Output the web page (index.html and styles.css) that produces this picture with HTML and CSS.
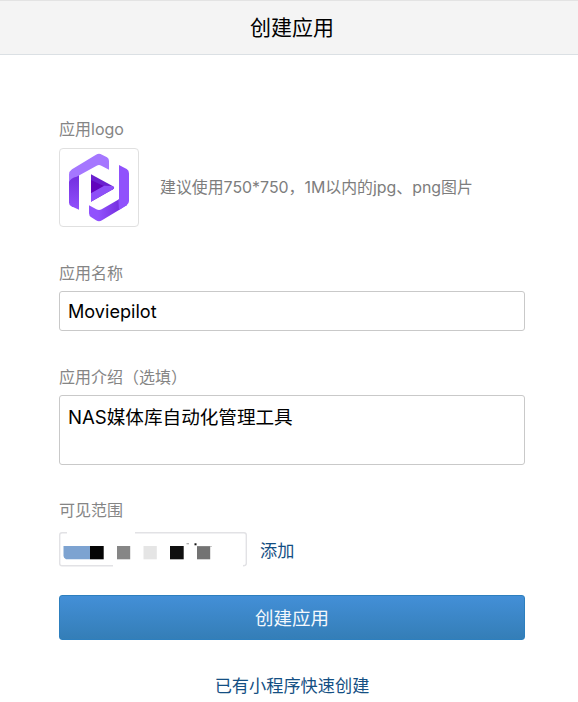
FILE: index.html
```html
<!DOCTYPE html>
<html lang="zh-CN">
<head>
<meta charset="utf-8">
<title>创建应用</title>
<link rel="stylesheet" href="styles.css">
</head>
<body>
<header class="header"><h1 class="title">创建应用</h1></header>
<main class="form">
  <section class="field field-logo">
    <div class="label">应用logo</div>
    <div class="logo-row">
      <div class="logo-box">
        <svg class="logo" viewBox="27 23 240 240">
          <defs>
            <linearGradient id="left" x1="0" y1="0" x2="0" y2="1"><stop offset="0" stop-color="#702bdc"/><stop offset="1" stop-color="#9151fc"/></linearGradient>
            <linearGradient id="bottom" x1="0" y1="0" x2="1" y2="0"><stop offset="0.3" stop-color="#9152fd"/><stop offset="1" stop-color="#7630e0"/></linearGradient>
          </defs>
          <path fill="url(#left)" d="M57 112 L87 96 V208 L64 198 Q57 194 57 187Z"/>
          <path fill="#a577ff" d="M57 125 V103 Q57 93 66 87 L138 43 Q147 37 156 43 L171 51 Q177 55 177 62 V88 L154 76 Q147 72 140 76 L80 109 Q62 113 57 125Z"/>
          <path fill="#9051fc" d="M207 74 L230 86 Q237 90 237 99 V182 Q237 190 230 195 L207 209Z"/>
          <path fill="url(#bottom)" d="M117 195 L139 207 Q147 211 155 207 L207 177 V209 L156 240 Q147 246 138 240 L124 231 Q117 227 117 219Z"/>
          <path fill="#9051fc" d="M205 178 L230 164 V195 L207 209Z"/>
          <path fill="#6a20cf" d="M123 102 L189 138 Q196 142 189 147 L123 184Z"/>
          <path fill="#6204bc" d="M123 119 L161 137 L123 159Z"/>
          <path fill="#8e50f8" d="M123 159 L163 136 L187 137 Q196 142 189 147 L123 184Z"/>
        </svg>
      </div>
      <span class="hint">建议使用750*750，1M以内的jpg、png图片</span>
    </div>
  </section>
  <section class="field field-name">
    <div class="label">应用名称</div>
    <div class="input name">Moviepilot</div>
  </section>
  <section class="field field-intro">
    <div class="label">应用介绍（选填）</div>
    <div class="input textarea">NAS媒体库自动化管理工具</div>
  </section>
  <section class="field field-scope">
    <div class="label">可见范围</div>
    <div class="scope-row">
      <svg class="scope" viewBox="0 0 188 35">
        <path class="scope-line" d="M8 .8H3Q.7 .8.7 3V31.5Q.7 33.8 3 33.8H54M76 .8H185Q187.3 .8 187.3 3V31.5Q187.3 33.8 184 33.8"/>
        <path fill="#7da3d1" d="M4.5 14H31V27.3H7Q4.5 26 4.5 24Z"/>
        <path fill="#050505" d="M31 14h13.7v13.3H31z"/>
        <path fill="#868686" d="M58 14h13.2v13.3H58z"/>
        <path fill="#e5e5e5" d="M84.5 14h13.3v13.3H84.5z"/>
        <path fill="#101010" d="M111 14h13.7v13.3H111z"/>
        <path fill="#737373" d="M138 14h13.2v13.3H138z"/>
        <path fill="#111" d="M135.5 11.3h2v2h-2z"/>
        <path fill="#999" d="M127.5 11.2h2.5v1h-2.5zM138 14h15v.6h-15z"/>
      </svg>
      <a class="link">添加</a>
    </div>
  </section>
  <button class="submit">创建应用</button>
  <a class="link quick">已有小程序快速创建</a>
</main>
</body>
</html>
```
FILE: styles.css
```css
* { box-sizing: border-box; }
body {
  margin: 0;
  height: 702px;
  overflow: hidden;
  background: #fff;
  color: #000;
  font-family: Inter, "Noto Sans CJK SC", sans-serif;
  font-feature-settings: "calt" 0;
}
.header {
  height: 55px;
  display: flex;
  align-items: center;
  justify-content: center;
  padding-left: 6px;
  background: #f4f4f4;
  border-top: 1px solid #e3e3e3;
  border-bottom: 1px solid #dbe0e4;
}
.title { margin: 0; font-size: 21px; line-height: 30px; font-weight: 400; }
.form {
  display: flex;
  flex-direction: column;
  width: 466px;
  margin-left: 59px;
  padding-top: 64px;
}
.label { height: 20px; font-size: 16px; line-height: 20px; color: #858585; }
.field-logo { height: 144px; }
.field-name { height: 104px; }
.field-intro { height: 133px; }
.field-scope { height: 95px; }
.logo-row { display: flex; align-items: center; gap: 21px; margin-top: 9px; }
.logo-box {
  width: 80px;
  height: 79px;
  border: 1px solid #e0e0e0;
  border-radius: 4px;
}
.logo { display: block; width: 80px; height: 80px; margin: -1px; }
.hint { padding-top: 1px; font-size: 15.9px; line-height: 20px; color: #7d7d7d; white-space: nowrap; }
.input {
  height: 40px;
  margin-top: 8px;
  padding: 0 8px;
  border: 1.5px solid #c9c9c9;
  border-radius: 3px;
  font-size: 18.6px;
  line-height: 38px;
}
.name { font-size: 18.1px; line-height: 39px; }
.textarea { height: 70px; line-height: 42px; }
.scope-row { display: flex; align-items: center; gap: 13px; margin-top: 12px; }
.scope { width: 188px; height: 35px; }
.scope-line { fill: none; stroke: #e2e2e5; stroke-width: 1.4; }
.link { font-size: 17.2px; line-height: 24px; color: #144f83; }
.scope-row .link { padding-top: 2px; }
.submit {
  height: 45px;
  padding: 0 0 2px;
  border: 1px solid #2d7fbe;
  border-radius: 3px;
  background: linear-gradient(#438fd7, #347eb7);
  color: #f4f8fc;
  font: inherit;
  font-size: 18.5px;
}
.quick { align-self: center; margin-top: 34px; }
```
